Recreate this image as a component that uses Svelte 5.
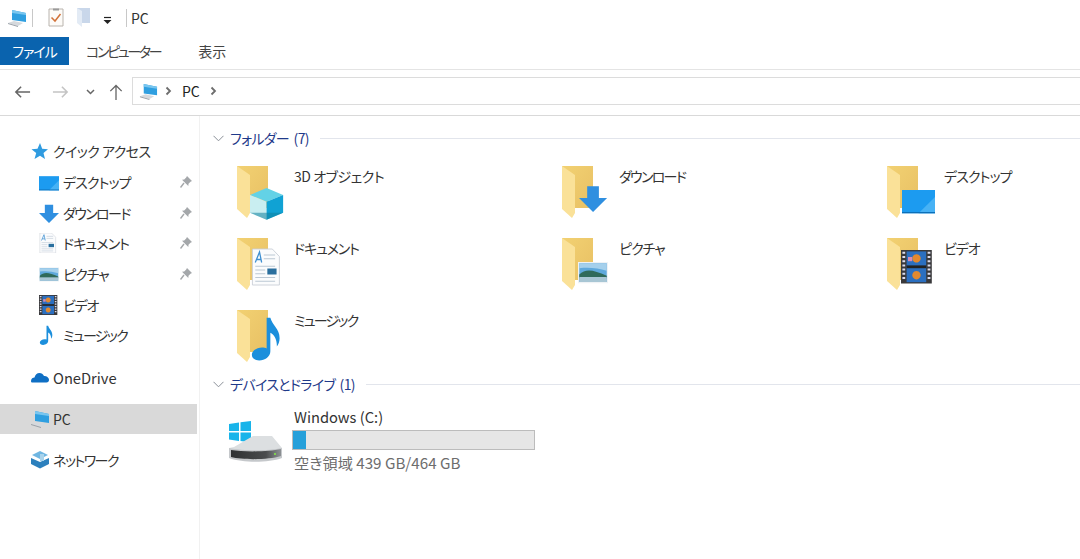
<script>
  const quick = [
    { label: 'デスクトップ', icon: 'desktop', pin: true, ls: -0.9 },
    { label: 'ダウンロード', icon: 'down', pin: true, ls: -1.6 },
    { label: 'ドキュメント', icon: 'doc', pin: true, ls: -0.9 },
    { label: 'ピクチャ', icon: 'pic', pin: true, ls: -1 },
    { label: 'ビデオ', icon: 'film', pin: false, ls: -1.2 },
    { label: 'ミュージック', icon: 'note', pin: false, ls: -1.7 }
  ]

  const folders = [
    { label: '3D オブジェクト', icon: 'cube', ls: -0.45 },
    { label: 'ダウンロード', icon: 'down', ls: -1.7 },
    { label: 'デスクトップ', icon: 'desktop', ls: -0.9 },
    { label: 'ドキュメント', icon: 'doc', ls: -1.1 },
    { label: 'ピクチャ', icon: 'pic', ls: -1 },
    { label: 'ビデオ', icon: 'film', ls: -1.1 },
    { label: 'ミュージック', icon: 'note', ls: -1.8 }
  ]

  // where each overlay sits on the 48x54 folder tile
  const overlay = {
    cube: 'translate(13 22) scale(1.38)',
    down: 'translate(17 18) scale(1.17)',
    desktop: 'translate(15 17) scale(1.38)',
    doc: 'translate(14 11) scale(1.42 1.5)',
    pic: 'translate(16 19) scale(1.25)',
    film: 'translate(14 12) scale(1.4)',
    note: 'translate(13 6) scale(1.85)'
  }
</script>

{#snippet glyph(name)}
  {#if name === 'cube'}
    <path d="M12 0 24 5 12 10 0 5z" fill="#63d2e6" />
    <path d="M0 5 12 10V23L0 18z" fill="#c9eef1" />
    <path d="M24 5 12 10V23L24 18z" fill="#10a2d4" />
    <path d="M12 18 24 18 12 23 0 18z" fill="#0e7f9c" opacity=".55" />
  {:else if name === 'down'}
    <path d="M7 2H17V12H24L12 24 0 12H7z" fill="#2f8fe0" />
  {:else if name === 'desktop'}
    <path d="M0 5H24V22H0z" fill="#1c9bf0" />
    <path d="M12 22 24 10V22z" fill="#47b2f5" />
    <path d="M0 21H24V22H0z" fill="#0c6fb8" />
  {:else if name === 'doc'}
    <path d="M1 0H15L20 5V24H1z" fill="#fbfcfd" stroke="#c8ced6" stroke-width=".6" />
    <path d="M3 9 6 2 7.500 9M4 7H7" fill="none" stroke="#3f8fd0" stroke-width=".9" />
    <path d="M9 4H17M9 6.500H17M3 11.500H17M3 14H10M3 16.500H10M3 19H17M3 21.500H17" stroke="#bcc8d4" stroke-width=".7" />
    <path d="M11.500 13H18V17H11.500z" fill="#2a6f9e" />
  {:else if name === 'pic'}
    <path d="M0 4H24V21H0z" fill="#eef2f5" />
    <path d="M1 5H23V20H1z" fill="#5fa9dc" />
    <path d="M1 5H23V11C16 9 9 8 1 9z" fill="#a5d0ec" />
    <path d="M1 14C6 9 12 10 23 15V17H1z" fill="#2f6a5a" />
    <path d="M1 16H23V20H1z" fill="#a8c6d4" />
  {:else if name === 'film'}
    <path d="M0 0H22V24H0z" fill="#39393b" />
    <path d="M4 1H18V23H4z" fill="#2b6fc0" />
    <path d="M4 11H18V13H4z" fill="#222" />
    <path d="M11 3a3 3 0 1 0 .1 0zM11 15a3 3 0 1 0 .1 0z" fill="#e2892f" />
    <path d="M5 5H8V8H5z" fill="#d88ab0" />
    <path d="M1 2H3M1 5H3M1 8H3M1 11H3M1 14H3M1 17H3M1 20H3M19 2H21M19 5H21M19 8H21M19 11H21M19 14H21M19 17H21M19 20H21" stroke="#dde" stroke-width="1.4" />
  {:else if name === 'note'}
    <path d="M9 1H11C12 5 16 7 16 12 16 14 15.300 15.500 14.500 16.500 14.700 12.500 13 10 11 9V19C11 22 8 24 5 24 2.500 24 1 22.800 1 21 1 18.500 4 17 6.500 17 7.500 17 8.400 17.200 9 17.500z" fill="#1c8fdc" />
  {/if}
{/snippet}

{#snippet small(name)}
  <svg width="20" height="20" viewBox="0 0 24 24" aria-hidden="true">{@render glyph(name)}</svg>
{/snippet}

{#snippet computer(w)}
  <svg width={w} height={w} viewBox="0 0 20 20" aria-hidden="true">
    <path d="M5 2 19 5V14L5 12z" fill="#2f9fe0" />
    <path d="M5 2 19 5V7L5 5z" fill="#79c6ef" />
    <path d="M1 15 7 13 16 15 11 18z" fill="#d5d9dd" />
    <path d="M1 15 11 18V19L1 16z" fill="#9aa1a8" />
  </svg>
{/snippet}

{#snippet pin()}
  <svg class="pin" width="14" height="14" viewBox="0 0 14 14" aria-hidden="true">
    <path d="M8 1 13 6 11.500 6.800 9.500 8.800 9.300 11 3 4.700 5.200 4.500 7.200 2.500z" fill="#a4a7aa" />
    <path d="M5 8 1.500 12.500" stroke="#a4a7aa" stroke-width="1.400" fill="none" />
  </svg>
{/snippet}

{#snippet chevron()}
  <svg width="7" height="10" viewBox="0 0 7 10" aria-hidden="true">
    <path d="M1.500 1.500 5 5 1.500 8.500" fill="none" stroke="#6d6d6d" stroke-width="1.800" />
  </svg>
{/snippet}

{#snippet header(title)}
  <div class="group">
    <svg width="11" height="7" viewBox="0 0 11 7" aria-hidden="true">
      <path d="M.5 .8 5.500 5.800 10.500 .8" fill="none" stroke="#8a8f98" stroke-width="1" />
    </svg>
    <span>{title}</span>
    <i></i>
  </div>
{/snippet}

<div class="window">
  <div class="titlebar">
    {@render computer(20)}
    <b class="sep first"></b>
    <svg class="check" width="16" height="19" viewBox="0 0 16 19" aria-hidden="true">
      <path d="M1 1H15V18H1z" fill="#fdfbf8" stroke="#b9b4ae" />
      <path d="M5 .5H11V2.500H5z" fill="#9a9a9a" />
      <path d="M3.500 9.500 7 13 12.500 6" fill="none" stroke="#d2733a" stroke-width="1.500" />
    </svg>
    <svg class="qfolder" width="13" height="19" viewBox="0 0 13 19" aria-hidden="true">
      <path d="M0 0H13V15H0z" fill="#c9d7ea" />
      <path d="M0 0 5 3V19L0 15z" fill="#e3ebf5" />
    </svg>
    <svg class="drop" width="9" height="9" viewBox="0 0 9 9" aria-hidden="true">
      <path d="M1 1.500H8" stroke="#222" stroke-width="1.200" />
      <path d="M.5 4H8.500L4.500 8z" fill="#222" />
    </svg>
    <b class="sep second"></b>
    <span>PC</span>
  </div>

  <div class="tabs">
    <span class="tab file">ファイル</span>
    <span class="tab computer">コンピューター</span>
    <span class="tab view">表示</span>
  </div>

  <div class="addressbar">
    <svg class="nav" width="17" height="14" viewBox="0 0 18 14" aria-hidden="true">
      <path d="M17 7H2M7.500 1.500 2 7 7.500 12.500" fill="none" stroke="#666" stroke-width="1.700" />
    </svg>
    <svg class="nav fwd" width="17" height="14" viewBox="0 0 18 14" aria-hidden="true">
      <path d="M1 7H16M10.500 1.500 16 7 10.500 12.500" fill="none" stroke="#c4c4c4" stroke-width="1.700" />
    </svg>
    <svg class="nav recent" width="9" height="6" viewBox="0 0 9 6" aria-hidden="true">
      <path d="M1 1 4.500 4.500 8 1" fill="none" stroke="#666" stroke-width="1.500" />
    </svg>
    <svg class="nav up" width="14" height="18" viewBox="0 0 16 18" aria-hidden="true">
      <path d="M8 18V2M1.500 8 8 1.500 14.500 8" fill="none" stroke="#666" stroke-width="1.500" />
    </svg>
    <div class="address">
      {@render computer(19)}
      {@render chevron()}
      <span>PC</span>
      {@render chevron()}
    </div>
  </div>

  <div class="main">
    <nav class="sidebar">
      <div class="row top">
        <svg class="star" width="20" height="20" viewBox="0 0 20 20" aria-hidden="true">
          <path d="M11 2 13.200 7.800 19 8.200 14.500 12 16 18 11 14.700 5.500 18 7.200 12 2.500 8.200 8.500 7.800z" fill="#2f9be0" />
        </svg>
        <span style="letter-spacing: -0.55px">クイック アクセス</span>
      </div>
      {#each quick as item}
        <div class="row sub">
          {@render small(item.icon)}
          <span style="letter-spacing: {item.ls}px">{item.label}</span>
          {#if item.pin}{@render pin()}{/if}
        </div>
      {/each}

      <div class="row top spaced first-gap">
        <svg width="20" height="20" viewBox="0 0 20 20" aria-hidden="true">
          <path d="M1 14C1 11.500 3 10.500 4.500 10.500 5 8 7 6 9.500 6 11.500 6 13 7 14 9 16.500 9 19 10.500 19 13 19 14.500 18 15.500 16.500 15.500H2.500C1.500 15.500 1 15 1 14z" fill="#0f6fc4" />
        </svg>
        <span class="en">OneDrive</span>
      </div>
      <div class="row top spaced current">
        {@render computer(20)}
        <span>PC</span>
      </div>
      <div class="row top spaced">
        <svg width="20" height="20" viewBox="0 0 20 20" aria-hidden="true">
          <path d="M10 1 18 5 10 9 2 5z" fill="#6fb6e2" />
          <path d="M1 8 10 12 19 8V14L10 18.500 1 14z" fill="#2c80bd" />
          <path d="M10 4H14V11H10z" fill="#a8d3ec" />
        </svg>
        <span style="letter-spacing: -1.5px">ネットワーク</span>
      </div>
    </nav>

    <section class="content">
      {@render header('フォルダー (7)')}
      <div class="tiles">
        {#each folders as f}
          <div class="tile">
            <svg width="48" height="54" viewBox="0 0 48 54" aria-hidden="true">
              <defs>
                <linearGradient id="back-{f.icon}" x1="0" y1="0" x2="1" y2="1">
                  <stop offset="0" stop-color="#f2d172" />
                  <stop offset="1" stop-color="#e8c064" />
                </linearGradient>
              </defs>
              <path d="M0 0H31V42H0z" fill="url(#back-{f.icon})" />
              <path d="M0 0 13 9V47L10 52 0 43z" fill="#fae198" />
              <g transform={overlay[f.icon]}>{@render glyph(f.icon)}</g>
            </svg>
            <span style="letter-spacing: {f.ls}px">{f.label}</span>
          </div>
        {/each}
      </div>

      {@render header('デバイスとドライブ (1)')}
      <div class="drive">
        <svg width="56" height="44" viewBox="0 0 56 44" aria-hidden="true">
          <defs>
            <linearGradient id="disk-front" x1="0" y1="0" x2="1" y2="0">
              <stop offset="0" stop-color="#2f3133" />
              <stop offset=".7" stop-color="#4a4c4e" />
              <stop offset="1" stop-color="#8d9194" />
            </linearGradient>
          </defs>
          <path d="M1 3 11 1.500V10H1zM12.500 1.300 23 0V10H12.500zM1 11.500H11V20L1 18.500zM12.500 11.500H23V21.500L12.500 20z" fill="#18b4ea" />
          <path d="M6 26 25 15H44L54 27V32H1V27z" fill="#dcdfe1" />
          <path d="M1 27C15 30 40 30 54 27V37C40 42 15 42 1 37z" fill="#c5c8cb" />
          <path d="M3 29C15 31 40 31 53 28V35C40 39 15 39 3 36z" fill="url(#disk-front)" />
          <path d="M46 32h2v2h-2z" fill="#7fd04f" />
        </svg>
        <div class="disk">
          <span class="name en">Windows (C:)</span>
          <div class="bar"><div class="used" style="width: {(25 / 464) * 100}%"></div></div>
          <span class="free">空き領域 439 GB/464 GB</span>
        </div>
      </div>
    </section>
  </div>
</div>

<style>
  :global(body) {
    background: #fff;
  }

  .window {
    width: 1080px;
    height: 559px;
    overflow: hidden;
    display: flex;
    flex-direction: column;
    font-family: "Noto Sans CJK JP", "Noto Sans", sans-serif;
    font-size: 14px;
    font-feature-settings: "palt";
    color: #333;
    background: #fff;
  }

  svg {
    display: block;
    flex: none;
  }

  .en {
    font-size: 14.7px;
  }

  .titlebar {
    height: 35px;
    padding-bottom: 2px;
    flex: none;
    display: flex;
    align-items: center;
    padding-left: 7px;
  }

  .sep {
    width: 1px;
    height: 18px;
    background: #c8c8c8;
  }

  .sep.first {
    margin-left: 5px;
  }

  .check {
    margin-left: 15px;
  }

  .qfolder {
    margin-left: 13px;
  }

  .drop {
    margin-left: 13px;
    margin-top: 5px;
  }

  .sep.second {
    margin-left: 14px;
    margin-right: 4px;
  }

  .tabs {
    height: 32px;
    flex: none;
    display: flex;
    align-items: flex-start;
    border-bottom: 1px solid #e4e4e4;
  }

  .tab {
    height: 28px;
    line-height: 29px;
  }

  .tab.file {
    width: 69px;
    text-align: center;
    background: #0a63ae;
    color: #fff;
    letter-spacing: -1px;
  }

  .tab.computer {
    margin-left: 17px;
    color: #444;
    letter-spacing: -2.3px;
  }

  .tab.view {
    margin-left: 38px;
    color: #444;
  }

  .addressbar {
    height: 42px;
    padding-bottom: 3px;
    flex: none;
    display: flex;
    align-items: center;
    border-bottom: 1px solid #d9d9d9;
  }

  .nav {
    margin-left: 14px;
    margin-top: 1px;
  }

  .nav.fwd {
    margin-left: 21px;
  }

  .nav.recent {
    margin-left: 17px;
  }

  .nav.up {
    margin-left: 14px;
    margin-top: 2px;
  }

  .address {
    margin-left: 9px;
    flex: 1;
    height: 28px;
    box-sizing: border-box;
    border: 1px solid #dcdcdc;
    border-right: 0;
    display: flex;
    align-items: center;
    padding-left: 6px;
    gap: 7px;
  }

  .address span {
    margin: 0 3px;
    color: #222;
  }

  .main {
    flex: 1;
    display: flex;
    min-height: 0;
  }

  .sidebar {
    width: 199px;
    flex: none;
    border-right: 1px solid #f1f1f1;
    padding-top: 20px;
  }

  .row {
    height: 30.7px;
    display: flex;
    align-items: center;
    margin-right: 2px;
  }

  .row.top {
    padding-left: 30px;
    gap: 3px;
  }

  .star {
    margin-left: -1px;
    margin-right: 1px;
  }

  .row.sub {
    padding-left: 39px;
    gap: 4px;
    padding-right: 4px;
  }

  .row.spaced {
    margin-top: 10px;
  }

  .row.first-gap {
    margin-top: 11.1px;
  }

  .row.current {
    background: #d9d9d9;
    margin-top: 11.2px;
  }

  .pin {
    margin-left: auto;
  }

  .content {
    flex: 1;
    padding: 11px 0 0 13px;
    min-width: 0;
  }

  .group {
    height: 22px;
    display: flex;
    align-items: center;
    gap: 6px;
    color: #1f3a8a;
    letter-spacing: -0.65px;
    word-spacing: 2px;
  }

  .group i {
    flex: 1;
    height: 1px;
    margin-left: 5px;
    background: #e2e5ec;
  }

  .tiles {
    margin: 17px 0 11px 24px;
    display: grid;
    grid-template-columns: repeat(3, 325px);
    grid-auto-rows: 52px;
    row-gap: 20px;
  }

  .tile {
    display: flex;
    gap: 9px;
    align-items: flex-start;
    line-height: 20px;
    color: #333;
  }

  .drive {
    margin: 12px 0 0 15px;
    display: flex;
    align-items: flex-start;
    gap: 8px;
  }

  .drive svg {
    margin-top: 14px;
  }

  .disk {
    display: flex;
    flex-direction: column;
  }

  .name {
    height: 22px;
    line-height: 20px;
    margin-left: 2px;
    color: #333;
  }

  .bar {
    width: 241px;
    height: 18px;
    margin-top: 1px;
    background: #e6e6e6;
    border: 1px solid #bcbcbc;
  }

  .used {
    height: 100%;
    background: #26a0da;
  }

  .free {
    margin-left: 2px;
    margin-top: 2px;
    font-size: 15.2px;
    line-height: 20px;
    color: #6d6d6d;
  }
</style>
